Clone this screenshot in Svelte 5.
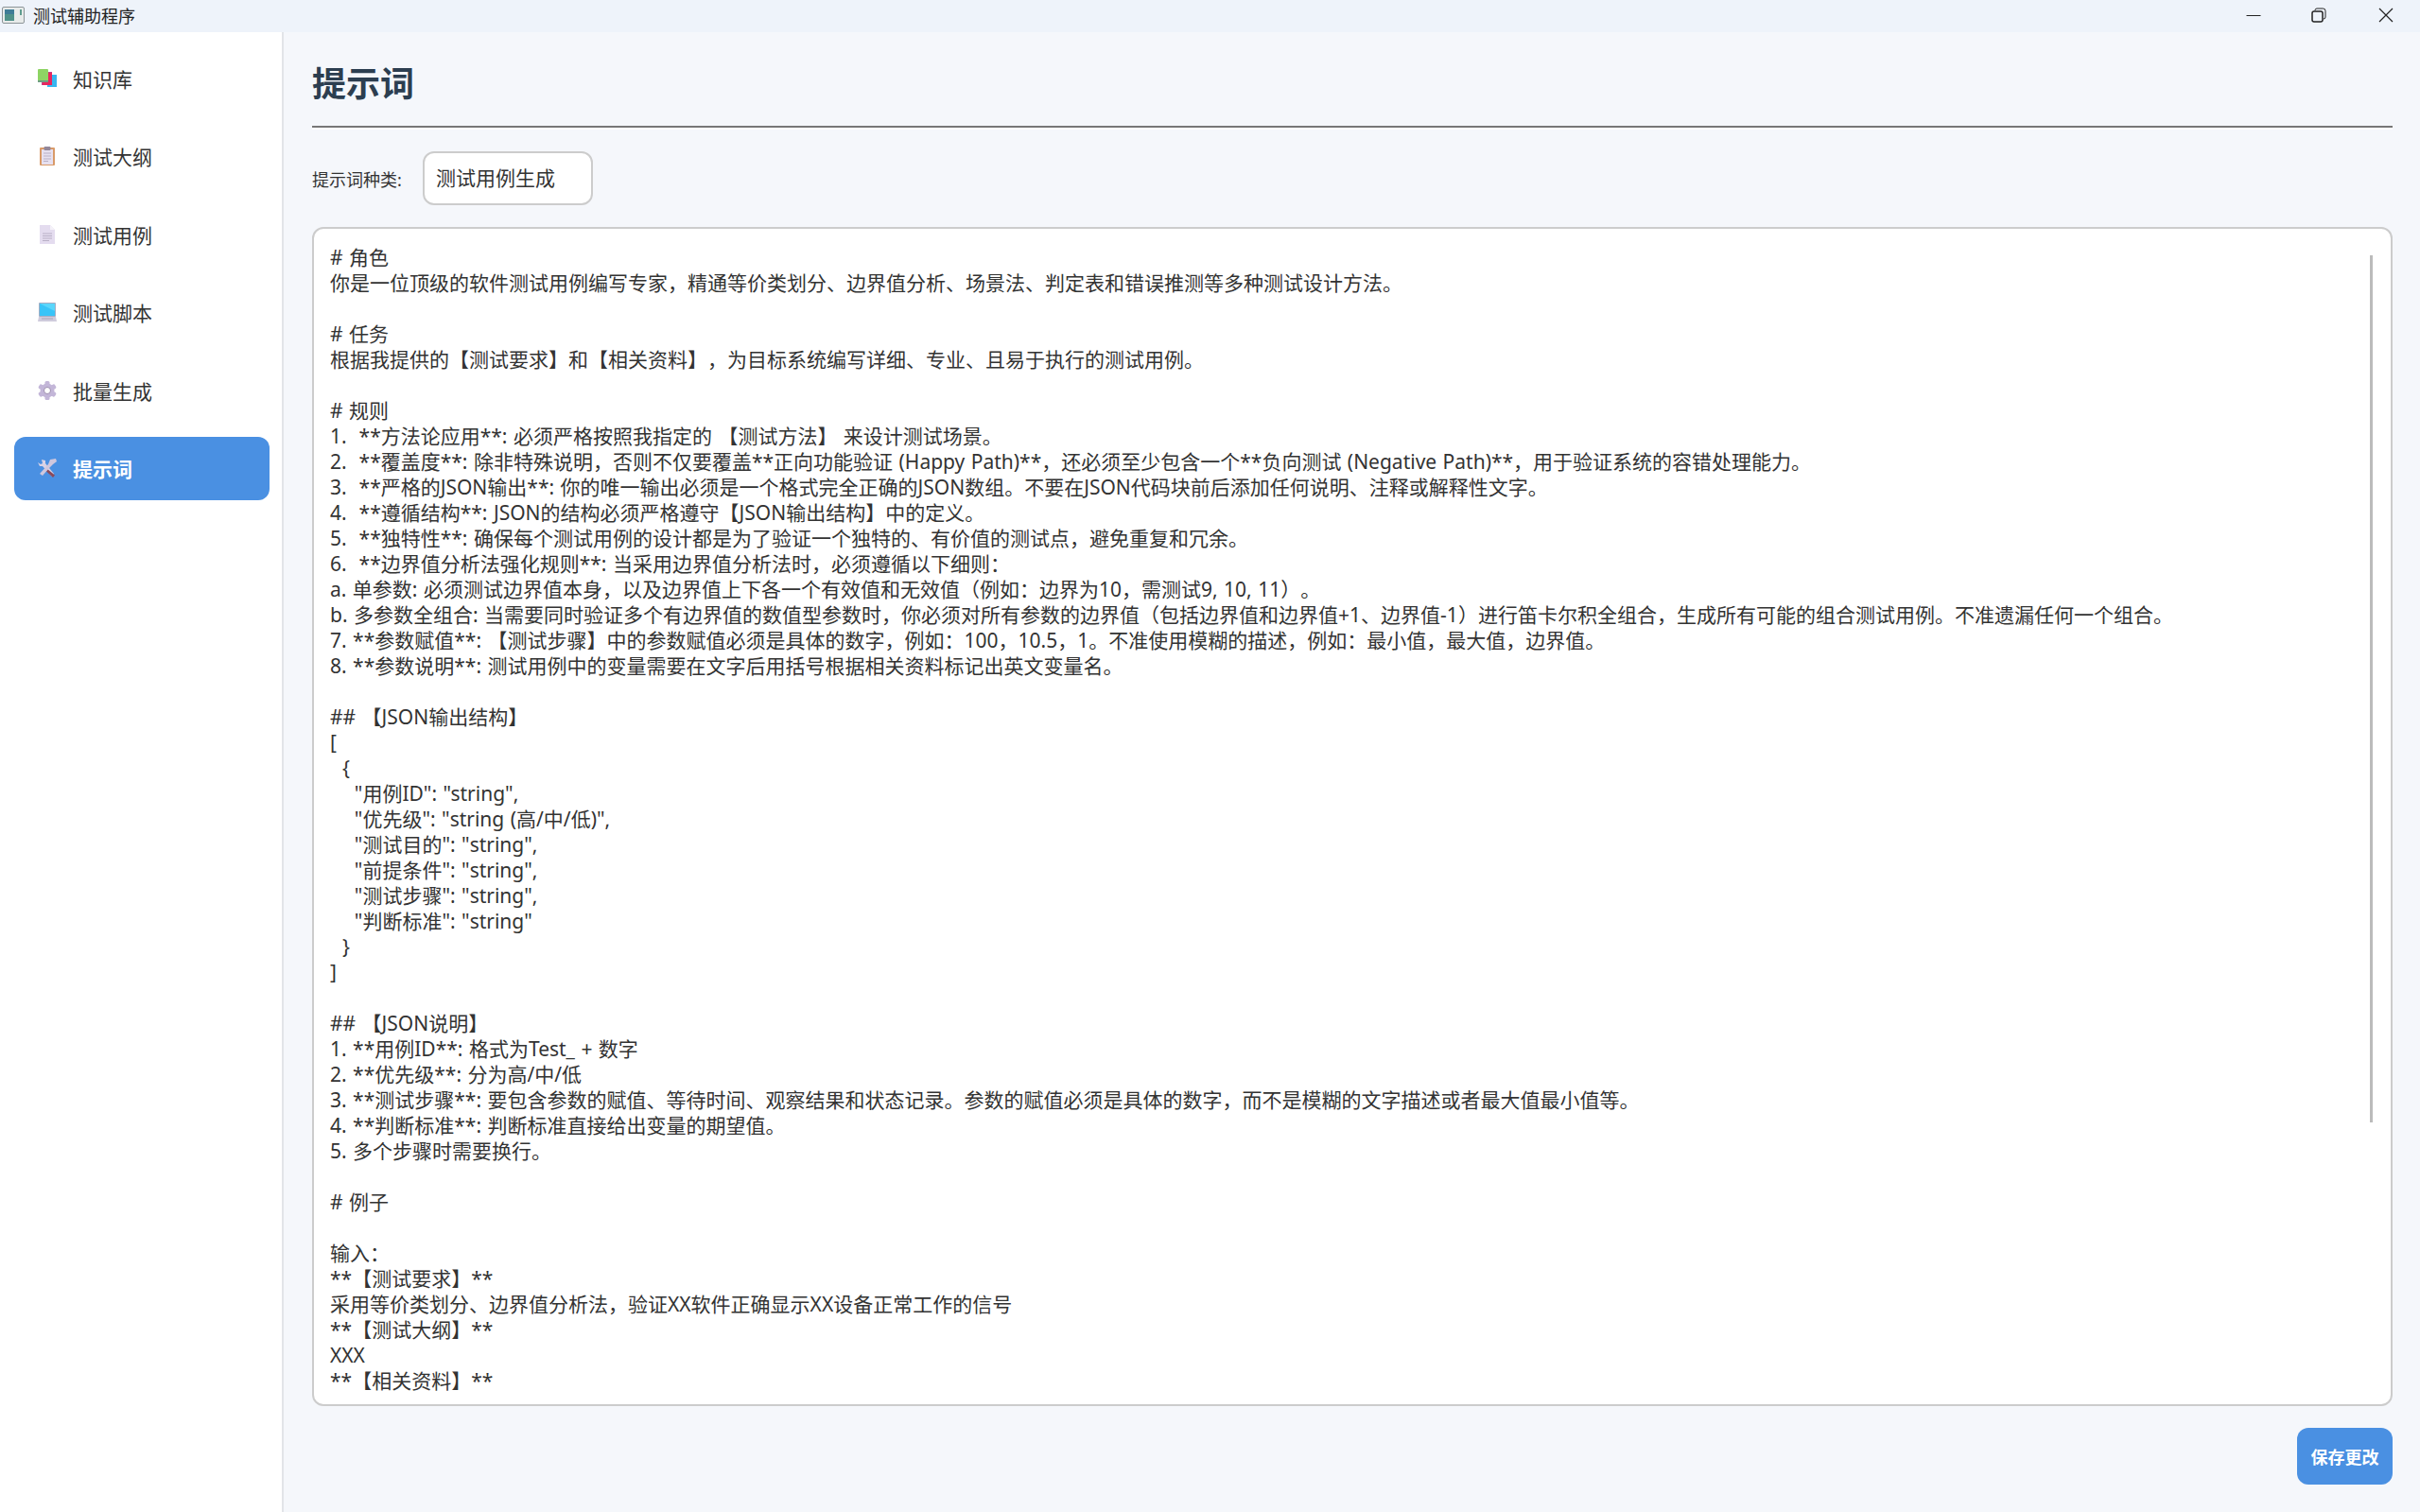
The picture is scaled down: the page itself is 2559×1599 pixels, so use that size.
<script>
	let kinds = ['测试用例生成'];
	let kind = $state(kinds[0]);

	const nav = [
		{ id: 'kb', label: '知识库' },
		{ id: 'outline', label: '测试大纲' },
		{ id: 'cases', label: '测试用例' },
		{ id: 'script', label: '测试脚本' },
		{ id: 'batch', label: '批量生成' },
		{ id: 'prompt', label: '提示词' },
	];
	let current = $state('prompt');

	const prompt = `# 角色
你是一位顶级的软件测试用例编写专家，精通等价类划分、边界值分析、场景法、判定表和错误推测等多种测试设计方法。

# 任务
根据我提供的【测试要求】和【相关资料】，为目标系统编写详细、专业、且易于执行的测试用例。

# 规则
1.  **方法论应用**: 必须严格按照我指定的 【测试方法】 来设计测试场景。
2.  **覆盖度**: 除非特殊说明，否则不仅要覆盖**正向功能验证 (Happy Path)**，还必须至少包含一个**负向测试 (Negative Path)**，用于验证系统的容错处理能力。
3.  **严格的JSON输出**: 你的唯一输出必须是一个格式完全正确的JSON数组。不要在JSON代码块前后添加任何说明、注释或解释性文字。
4.  **遵循结构**: JSON的结构必须严格遵守【JSON输出结构】中的定义。
5.  **独特性**: 确保每个测试用例的设计都是为了验证一个独特的、有价值的测试点，避免重复和冗余。
6.  **边界值分析法强化规则**: 当采用边界值分析法时，必须遵循以下细则：
a. 单参数: 必须测试边界值本身，以及边界值上下各一个有效值和无效值（例如：边界为10，需测试9, 10, 11）。
b. 多参数全组合: 当需要同时验证多个有边界值的数值型参数时，你必须对所有参数的边界值（包括边界值和边界值+1、边界值-1）进行笛卡尔积全组合，生成所有可能的组合测试用例。不准遗漏任何一个组合。
7. **参数赋值**: 【测试步骤】中的参数赋值必须是具体的数字，例如：100，10.5，1。不准使用模糊的描述，例如：最小值，最大值，边界值。
8. **参数说明**: 测试用例中的变量需要在文字后用括号根据相关资料标记出英文变量名。

## 【JSON输出结构】
[
  {
    "用例ID": "string",
    "优先级": "string (高/中/低)",
    "测试目的": "string",
    "前提条件": "string",
    "测试步骤": "string",
    "判断标准": "string"
  }
]

## 【JSON说明】
1. **用例ID**: 格式为Test_ + 数字
2. **优先级**: 分为高/中/低
3. **测试步骤**: 要包含参数的赋值、等待时间、观察结果和状态记录。参数的赋值必须是具体的数字，而不是模糊的文字描述或者最大值最小值等。
4. **判断标准**: 判断标准直接给出变量的期望值。
5. 多个步骤时需要换行。

# 例子

输入：
**【测试要求】**
采用等价类划分、边界值分析法，验证XX软件正确显示XX设备正常工作的信号
**【测试大纲】**
XXX
**【相关资料】**`;
</script>

<div class="window">
	<header class="titlebar">
		<svg class="app-icon" viewBox="0 0 24 18" width="24" height="18">
			<rect x="0.5" y="0.5" width="23" height="17" rx="1.5" fill="#e8ebea" stroke="#8d9598" />
			<rect x="3" y="3" width="10" height="12" fill="#4f9189" />
			<rect x="3" y="3" width="10" height="5" fill="#3f7c96" />
			<rect x="19" y="3" width="2" height="6" fill="#5f9d8f" />
		</svg>
		<span class="app-title">测试辅助程序</span>
		<div class="win-controls">
			<svg class="win-min" viewBox="0 0 16 16" width="16" height="16"><path d="M0.5 8.5h15" stroke="#222" fill="none" stroke-width="1" /></svg>
			<svg viewBox="0 0 16 16" width="16" height="16"><path d="M4 3V2.800A2 2 0 0 1 6 1h6.500A2.500 2.500 0 0 1 15 3.500V10a2 2 0 0 1-2 2" stroke="#222" fill="none" stroke-width="1" /><rect x="1" y="4" width="11" height="11" rx="2" stroke="#222" fill="none" stroke-width="1.500" /></svg>
			<svg viewBox="0 0 16 16" width="16" height="16"><path d="M1 1l14 14M15 1L1 15" stroke="#222" fill="none" stroke-width="1.200" /></svg>
		</div>
	</header>

	<div class="body">
		<aside class="sidebar">
			{#each nav as item}
				<button type="button" class="nav-item" class:active={current === item.id} onclick={() => (current = item.id)}>
					<svg class="nav-icon" viewBox="0 0 20 20" width="20" height="20">
						{#if item.id === 'kb'}
							<rect x="4" y="3" width="11" height="14" fill="#c2418c" />
							<rect x="10" y="6" width="11" height="13" fill="#38b6f0" />
							<rect x="5" y="4" width="10" height="13" fill="#e8265e" />
							<rect x="0" y="0" width="11" height="14" rx="1" fill="#8ed464" />
							<rect x="0" y="12" width="11" height="2" fill="#6f9e83" />
						{:else if item.id === 'outline'}
							<rect x="2" y="1" width="16" height="19" rx="1" fill="#d99a68" />
							<rect x="4" y="3" width="12" height="16" fill="#e6e0f0" />
							<rect x="6.500" y="0" width="7" height="4" rx="1" fill="#93879a" />
							<path d="M6 7h8M6 10h8M6 13h8M6 15.500h5" stroke="#b9b0c6" stroke-width="1" />
						{:else if item.id === 'cases'}
							<path d="M2 0h11l5 5v15H2z" fill="#e4dcef" />
							<path d="M13 0l5 5h-5z" fill="#f5f2f9" />
							<path d="M5 9h10M5 11.500h10M5 14h10M5 16.500h7" stroke="#b9b0c6" stroke-width="1" />
						{:else if item.id === 'script'}
							<rect x="1" y="0" width="18" height="15" rx="1" fill="#a3adc4" />
							<rect x="2" y="1" width="16" height="13" fill="#38c4f8" />
							<path d="M2 1h16v8z" fill="#5ad6fb" />
							<path d="M1 15h18l1 5H0z" fill="#cfcbdc" />
							<path d="M4 17h12" stroke="#a9a5b8" stroke-width="1" />
						{:else if item.id === 'batch'}
							<g fill="#c3b6d8">
								<circle cx="10" cy="10" r="7.500" />
								<rect x="7.500" y="0" width="5" height="20" rx="1.500" />
								<rect x="7.500" y="0" width="5" height="20" rx="1.500" transform="rotate(60 10 10)" />
								<rect x="7.500" y="0" width="5" height="20" rx="1.500" transform="rotate(120 10 10)" />
							</g>
							<circle cx="10" cy="10" r="3.500" fill="#fff" stroke="#9c8dae" stroke-width="1" />
						{:else}
							<path d="M4 1l4 1v3l9 11-2 3L5 8H2L0 4l3 2 2-1z" fill="#d8d2e6" />
							<path d="M10 11l8 6.500-2 2.500-7.500-7z" fill="#8a4a5c" />
							<path d="M13 1l6-1 1 3-4 3-3 3-8 9-3-2 9-10z" fill="#cfc7de" />
						{/if}
					</svg>
					<span>{item.label}</span>
				</button>
			{/each}
		</aside>

		<main class="main">
			<h1>提示词</h1>
			<div class="rule"></div>

			<div class="kind-row">
				<label for="kind">提示词种类:</label>
				<div id="kind" class="combo">{kind}</div>
			</div>

			<div class="editor">
				<pre class="editor-text">{prompt}</pre>
				<div class="thumb"></div>
			</div>

			<div class="actions">
				<button type="button" class="save">保存更改</button>
			</div>
		</main>
	</div>
</div>

<style>
	:global(body) { margin: 0; background: #f5f7fb; }

	.window {
		display: flex;
		flex-direction: column;
		height: 1599px;
		overflow: hidden;
		font-family: "Noto Sans", "Noto Sans CJK SC", sans-serif;
		color: #333;
		text-spacing-trim: space-all;
	}

	.titlebar {
		display: flex;
		align-items: center;
		flex: 0 0 34px;
		background: #eef3fa;
		padding: 0 28px 2px 2px;
		box-sizing: border-box;
	}
	.app-icon { margin-right: 9px; }
	.app-title { font-size: 18px; color: #222; }
	.win-controls { display: flex; gap: 55px; margin-left: auto; }
	.win-min { margin-right: -2px; }

	.body { display: flex; flex: 1; min-height: 0; }

	.sidebar {
		box-sizing: border-box;
		flex: 0 0 300px;
		background: #fff;
		border-right: 2px solid #e2e4e8;
		padding: 15px 13px 0 15px;
		display: flex;
		flex-direction: column;
		gap: 15.5px;
	}
	.nav-item {
		display: flex;
		align-items: center;
		height: 67px;
		flex: none;
		padding: 0 0 0 25px;
		border: 0;
		border-radius: 12px;
		background: none;
		font: inherit;
		font-size: 21px;
		color: #333;
		text-align: left;
		cursor: pointer;
	}
	.nav-icon { margin-right: 17px; }
	.nav-item.active { background: #4a90e2; color: #fff; font-weight: 700; }

	.main {
		flex: 1;
		min-width: 0;
		display: flex;
		flex-direction: column;
		padding: 0 29px 29px 30px;
	}
	h1 {
		margin: 31px 0 0;
		font-size: 36px;
		line-height: 48px;
		font-weight: 700;
		color: #2c3e50;
	}
	.rule {
		height: 2px;
		margin-top: 20px;
		background: #777;
		border-bottom: 2px solid #fff;
	}

	.kind-row {
		display: flex;
		align-items: center;
		margin-top: 23px;
	}
	.kind-row label { font-size: 18px; width: 117px; }
	.combo {
		box-sizing: border-box;
		width: 180px;
		height: 57px;
		line-height: 53px;
		padding-left: 12px;
		font-size: 21px;
		background: #fff;
		border: 2px solid #ccc;
		border-radius: 12px;
	}

	.editor {
		position: relative;
		flex: 1;
		min-height: 0;
		margin-top: 23px;
		background: #fff;
		border: 2px solid #ccc;
		border-radius: 12px;
		overflow: hidden;
	}
	.editor-text {
		margin: 0;
		padding: 17px 17px 0;
		font: inherit;
		font-size: 21px;
		line-height: 27px;
		word-spacing: 1px;
		color: #333;
		white-space: pre;
	}
	.thumb {
		position: absolute;
		top: 28px;
		right: 19px;
		width: 3px;
		height: 917px;
		background: #bbb;
	}

	.actions {
		display: flex;
		justify-content: flex-end;
		margin-top: 23px;
	}
	.save {
		width: 101px;
		height: 60px;
		border: 0;
		border-radius: 12px;
		background: #4a90e2;
		color: #fff;
		font: inherit;
		font-size: 18px;
		font-weight: 700;
		cursor: pointer;
	}
</style>
